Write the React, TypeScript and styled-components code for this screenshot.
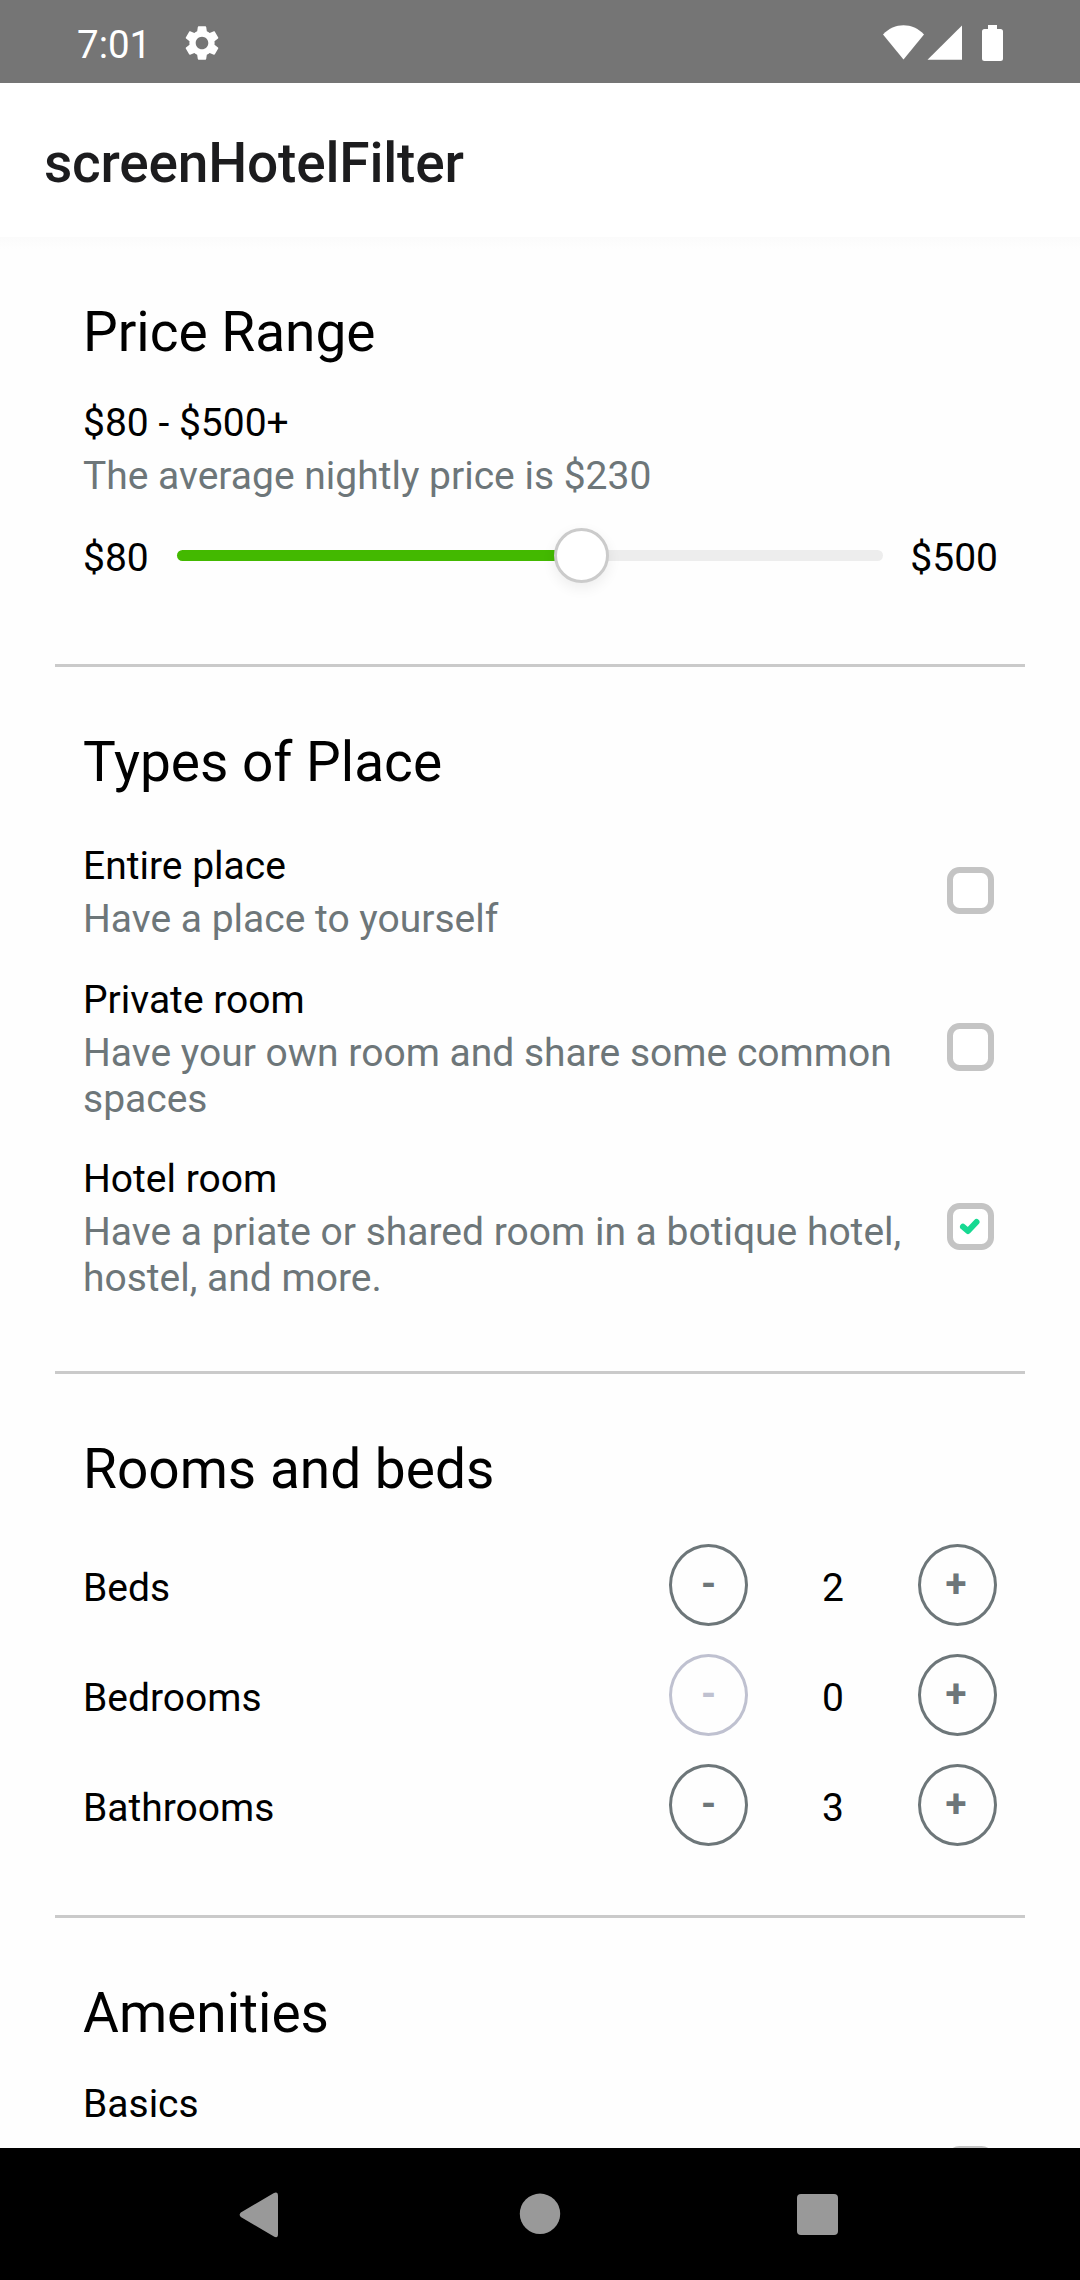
import React, { useState } from 'react';
import styled, { createGlobalStyle } from 'styled-components';

const colors = {
  text: '#000',
  muted: '#6d7679',
  disabled: '#bfc1d0',
  line: '#cacaca',
  box: '#c4c4c4',
  green: '#43b900',
  check: '#17d992',
  nav: '#999',
  page: '#fefefe',
};

const GlobalStyle = createGlobalStyle`
  * { box-sizing: border-box; }
  body { margin: 0; background: ${colors.page}; }
  button { font-family: inherit; }
`;

const Screen = styled.div`
  display: flex;
  flex-direction: column;
  width: 1080px;
  height: 2280px;
  overflow: hidden;
  background: ${colors.page};
  color: ${colors.text};
  font-family: Roboto, 'Noto Sans', sans-serif;
  font-size: 39px;
  line-height: 46px;
`;

const StatusBar = styled.header`
  display: flex;
  flex: none;
  justify-content: space-between;
  height: 83px;
  padding: 22px 77px 0 77px;
  background: #757575;
  color: #fff;
`;

const StatusGroup = styled.div`
  display: flex;
  align-items: flex-start;
`;

const Clock = styled.span`
  width: 103.5px;
  font-size: 38.5px;
`;

const AppBar = styled.div`
  display: flex;
  flex: none;
  align-items: center;
  height: 154px;
  padding-left: 44px;
  background: #fff;
`;

const AppTitle = styled.h1`
  margin: 5px 0 0;
  color: #1c1c1e;
  font-size: 55px;
  font-weight: 500;
  letter-spacing: -0.2px;
  line-height: 64px;
`;

const Content = styled.main`
  flex: 1;
  min-height: 0;
  overflow: hidden;
  padding: 0 55px;
  background: linear-gradient(#fbfbfb, ${colors.page} 12px);
`;

const Section = styled.section<{ $height?: number }>`
  display: flex;
  flex-direction: column;
  height: ${(p) => (p.$height ? `${p.$height}px` : 'auto')};
  padding: 63px 27px 0 28px;
  border-bottom: ${(p) => (p.$height ? `3px solid ${colors.line}` : 'none')};
`;

const SectionTitle = styled.h2`
  margin: 0;
  font-size: 55px;
  font-weight: 400;
  line-height: 64px;
`;

const Label = styled.div`
  white-space: nowrap;
`;

const Description = styled.div`
  margin-top: 7px;
  color: ${colors.muted};
`;

const PriceSummary = styled.div`
  margin-top: 36px;
`;

const SliderRow = styled.div`
  display: grid;
  grid-template-columns: 94px 706px 1fr;
  height: 55px;
  margin-top: 29px;
`;

const SliderLabel = styled.span<{ $end?: boolean }>`
  padding-top: 7px;
  text-align: ${(p) => (p.$end ? 'right' : 'left')};
`;

const Track = styled.div`
  display: flex;
  align-items: center;
`;

const TrackFill = styled.div`
  height: 11px;
  margin-right: -28px;
  border-radius: 5.5px 0 0 5.5px;
  background: ${colors.green};
`;

const Thumb = styled.div`
  z-index: 1;
  flex: none;
  width: 55px;
  height: 55px;
  border: 3px solid #cbcbcb;
  border-radius: 50%;
  background: #fff;
  box-shadow: 0 5px 14px rgba(0, 0, 0, 0.07);
`;

const TrackRest = styled.div`
  flex: 1;
  height: 11px;
  margin-left: -28px;
  border-radius: 0 5.5px 5.5px 0;
  background: #ededed;
`;

const PlaceList = styled.div`
  display: flex;
  flex-direction: column;
  gap: 34.5px;
  margin-top: 49px;
`;

const PlaceRow = styled.div`
  display: flex;
  justify-content: space-between;
  align-items: center;
  padding-right: 4px;
`;

const PlaceText = styled.div`
  width: 840px;
`;

const CheckBox = styled.button`
  display: flex;
  flex: none;
  align-items: center;
  justify-content: center;
  width: 47.5px;
  height: 47.5px;
  margin-top: -4px;
  padding: 0;
  border: 6px solid ${colors.box};
  border-radius: 12.5px;
  background: #fff;
`;

const Counters = styled.div`
  display: flex;
  flex-direction: column;
  gap: 28px;
  margin-top: 43px;
`;

const CounterRow = styled.div`
  display: grid;
  grid-template-columns: 1fr 79px 170px 79px;
  height: 82px;
  margin-right: 1px;
`;

const CounterText = styled.span<{ $center?: boolean }>`
  padding-top: 21px;
  text-align: ${(p) => (p.$center ? 'center' : 'left')};
`;

const StepButton = styled.button<{ $disabled?: boolean; $plus?: boolean }>`
  display: flex;
  justify-content: center;
  align-items: flex-start;
  width: 79px;
  height: 82px;
  padding: 14px ${(p) => (p.$plus ? 3 : 0)}px 0 0;
  border: 3px solid currentColor;
  border-radius: 50%;
  background: transparent;
  color: ${(p) => (p.$disabled ? colors.disabled : colors.muted)};
  font-size: 38.5px;
  font-weight: 700;
  line-height: 46px;
`;

const AmenityLabel = styled(Label)`
  margin-top: 36px;
`;

const AmenityRow = styled.div`
  display: flex;
  justify-content: flex-end;
  margin-top: 23px;
  padding-right: 4px;
`;

const NavBar = styled.nav`
  display: flex;
  flex: none;
  justify-content: space-between;
  align-items: flex-start;
  height: 132px;
  padding: 44px 240px 0 237px;
  background: #000;
`;

function GearIcon() {
  return (
    <svg width="42" height="42" viewBox="0 0 24 24" fill="#fff">
      <path d="M19.14 12.94c.04-.3.06-.61.06-.94 0-.32-.02-.64-.07-.94l2.03-1.58c.18-.14.23-.41.12-.61l-1.92-3.32c-.12-.22-.37-.29-.59-.22l-2.39.96c-.5-.38-1.03-.7-1.62-.94l-.36-2.54c-.04-.24-.24-.41-.48-.41h-3.84c-.24 0-.43.17-.47.41l-.36 2.54c-.59.24-1.13.57-1.62.94l-2.39-.96c-.22-.08-.47 0-.59.22L2.74 8.87c-.12.21-.08.47.12.61l2.03 1.58c-.05.3-.09.63-.09.94s.02.64.07.94l-2.03 1.58c-.18.14-.23.41-.12.61l1.92 3.32c.12.22.37.29.59.22l2.39-.96c.5.38 1.03.7 1.62.94l.36 2.54c.05.24.24.41.48.41h3.84c.24 0 .44-.17.47-.41l.36-2.54c.59-.24 1.13-.56 1.62-.94l2.39.96c.22.08.47 0 .59-.22l1.92-3.32c.12-.22.07-.47-.12-.61l-2.01-1.58zM12 15.6c-1.98 0-3.6-1.62-3.6-3.6s1.62-3.6 3.6-3.6 3.6 1.62 3.6 3.6-1.62 3.6-3.6 3.6z" />
    </svg>
  );
}

function SignalIcons() {
  return (
    <svg width="120" height="40" viewBox="0 0 120 40" fill="#fff">
      <path d="M20.5 37.5 0 12.5C11.5.2 29.5.2 41 12.5z" />
      <path d="M44.5 37.7H79V3.5z" />
      <path d="M105 3h9v4h3.5a2.5 2.5 0 0 1 2.5 2.5v27a2.5 2.5 0 0 1-2.5 2.5h-16a2.5 2.5 0 0 1-2.5-2.5v-27a2.5 2.5 0 0 1 2.5-2.5h3.5z" />
    </svg>
  );
}

function CheckMark() {
  return (
    <svg width="22" height="18" viewBox="0 0 22 18">
      <path d="M4 8.8 9 13 17.5 4" fill="none" stroke={colors.check} strokeWidth="6" strokeLinecap="round" strokeLinejoin="round" />
    </svg>
  );
}

const initialPlaces = [
  { label: 'Entire place', description: 'Have a place to yourself', checked: false },
  { label: 'Private room', description: 'Have your own room and share some common spaces', checked: false },
  { label: 'Hotel room', description: 'Have a priate or shared room in a botique hotel, hostel, and more.', checked: true },
];

const initialCounts = [
  { label: 'Beds', count: 2 },
  { label: 'Bedrooms', count: 0 },
  { label: 'Bathrooms', count: 3 },
];

export default function App() {
  const [places, setPlaces] = useState(initialPlaces);
  const [counts, setCounts] = useState(initialCounts);
  const fillWidth = 404.5;

  const toggle = (index: number) =>
    setPlaces(places.map((p, i) => (i === index ? { ...p, checked: !p.checked } : p)));
  const step = (index: number, by: number) =>
    setCounts(counts.map((c, i) => (i === index ? { ...c, count: Math.max(0, c.count + by) } : c)));

  return (
    <Screen>
      <GlobalStyle />
      <StatusBar>
        <StatusGroup>
          <Clock>7:01</Clock>
          <GearIcon />
        </StatusGroup>
        <SignalIcons />
      </StatusBar>
      <AppBar>
        <AppTitle>screenHotelFilter</AppTitle>
      </AppBar>
      <Content>
        <Section $height={430}>
          <SectionTitle>Price Range</SectionTitle>
          <PriceSummary>
            <Label>$80 - $500+</Label>
            <Description>The average nightly price is $230</Description>
          </PriceSummary>
          <SliderRow>
            <SliderLabel>$80</SliderLabel>
            <Track>
              <TrackFill style={{ width: fillWidth }} />
              <Thumb />
              <TrackRest />
            </Track>
            <SliderLabel $end>$500</SliderLabel>
          </SliderRow>
        </Section>
        <Section $height={707}>
          <SectionTitle>Types of Place</SectionTitle>
          <PlaceList>
            {places.map((place, i) => (
              <PlaceRow key={place.label}>
                <PlaceText>
                  <Label>{place.label}</Label>
                  <Description>{place.description}</Description>
                </PlaceText>
                <CheckBox aria-label={place.label} onClick={() => toggle(i)}>
                  {place.checked && <CheckMark />}
                </CheckBox>
              </PlaceRow>
            ))}
          </PlaceList>
        </Section>
        <Section $height={544}>
          <SectionTitle>Rooms and beds</SectionTitle>
          <Counters>
            {counts.map((item, i) => (
              <CounterRow key={item.label}>
                <CounterText>{item.label}</CounterText>
                <StepButton $disabled={item.count === 0} onClick={() => step(i, -1)}>-</StepButton>
                <CounterText $center>{item.count}</CounterText>
                <StepButton $plus onClick={() => step(i, 1)}>+</StepButton>
              </CounterRow>
            ))}
          </Counters>
        </Section>
        <Section>
          <SectionTitle>Amenities</SectionTitle>
          <AmenityLabel>Basics</AmenityLabel>
          <AmenityRow>
            <CheckBox aria-label="Basics" />
          </AmenityRow>
        </Section>
      </Content>
      <NavBar>
        <svg width="46" height="46" viewBox="0 0 46 46" fill={colors.nav}>
          <path d="M3.8 20.5 36.500 1.300Q41 -1 41 4V42Q41 47 36.500 44.200L3.800 25Q1.500 22.800 3.800 20.500z" />
        </svg>
        <svg width="42" height="46" viewBox="0 0 42 46" fill={colors.nav}>
          <circle cx="21" cy="21.8" r="20.2" />
        </svg>
        <svg width="43" height="46" viewBox="0 0 43 46" fill={colors.nav}>
          <rect x="0" y="2" width="41" height="41" rx="4" />
        </svg>
      </NavBar>
    </Screen>
  );
}
